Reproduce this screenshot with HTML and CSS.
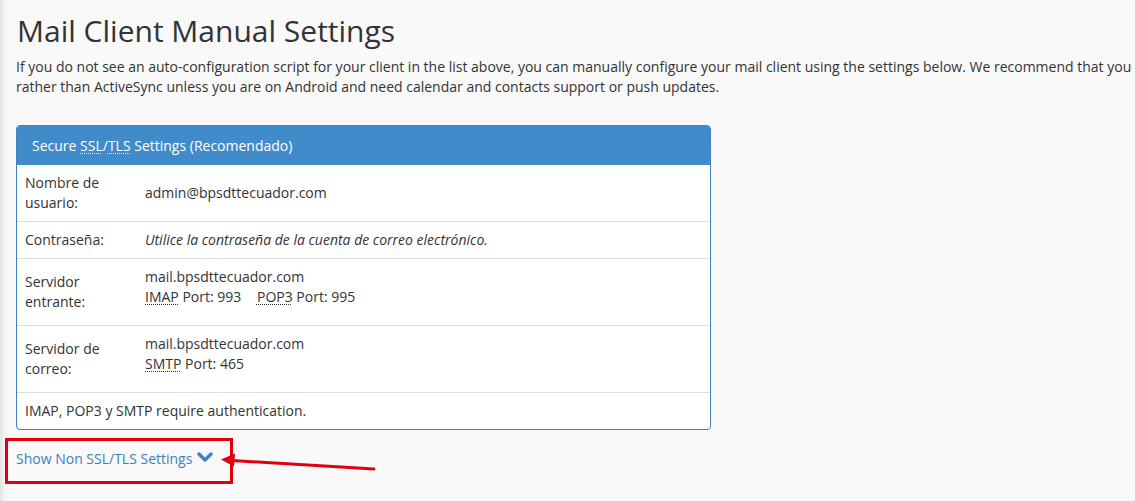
FILE: index.html
```html
<!DOCTYPE html>
<html lang="en">
<head>
<meta charset="utf-8">
<title>Mail Client Manual Settings</title>
<link rel="stylesheet" href="styles.css">
</head>
<body>
<main class="page">
  <h1 class="title">Mail Client Manual Settings</h1>
  <p class="intro">If you do not see an auto-configuration script for your client in the list above, you can manually configure your mail client using the settings below. We recommend that you<br>rather than ActiveSync unless you are on Android and need calendar and contacts support or push updates.</p>

  <section class="panel">
    <div class="panel-heading">Secure <abbr title="Secure Sockets Layer">SSL</abbr>/<abbr title="Transport Layer Security">TLS</abbr> Settings (Recomendado)</div>
    <table class="settings">
      <tr>
        <td class="label">Nombre de usuario:</td>
        <td class="value">admin@bpsdttecuador.com</td>
      </tr>
      <tr>
        <td class="label">Contraseña:</td>
        <td class="value"><em>Utilice la contraseña de la cuenta de correo electrónico.</em></td>
      </tr>
      <tr>
        <td class="label">Servidor entrante:</td>
        <td class="value server">
          <div>mail.bpsdttecuador.com</div>
          <div><abbr title="Internet Message Access Protocol">IMAP</abbr> Port: 993 <span class="gap"></span><abbr title="Post Office Protocol 3">POP3</abbr> Port: 995</div>
        </td>
      </tr>
      <tr>
        <td class="label">Servidor de correo:</td>
        <td class="value server">
          <div>mail.bpsdttecuador.com</div>
          <div><abbr title="Simple Mail Transfer Protocol">SMTP</abbr> Port: 465</div>
        </td>
      </tr>
      <tr>
        <td class="note" colspan="2">IMAP, POP3 y SMTP require authentication.</td>
      </tr>
    </table>
  </section>

  <a class="toggle" href="#">Show Non SSL/TLS Settings
    <svg class="chevron" viewBox="0 0 16 11" width="16" height="11" aria-hidden="true"><polyline points="2,2 8,8 14,2" fill="none" stroke="currentColor" stroke-width="3.4" stroke-linecap="round" stroke-linejoin="round"/></svg>
  </a>
</main>

<svg class="annotation" width="1135" height="501" viewBox="0 0 1135 501" aria-hidden="true">
  <rect x="6.5" y="439.5" width="225" height="43" fill="none" stroke="#e1000e" stroke-width="3"/>
  <line x1="374" y1="469" x2="232" y2="460.5" stroke="#e1000e" stroke-width="3" stroke-linecap="round"/>
  <polygon points="221,459.5 235,453.5 234,466.5" fill="#e1000e"/>
</svg>
</body>
</html>
```

FILE: styles.css
```css
html, body {
  margin: 0;
  padding: 0;
  overflow: hidden;
}

body {
  background: linear-gradient(to right, #e2e2e2 0px, #f2f2f2 4px, #f9f9f9 9px) #f9f9f9;
  font-family: "Open Sans", "Noto Sans", sans-serif;
  font-size: 14px;
  line-height: 20px;
  color: #333;
  position: relative;
  width: 1135px;
  height: 501px;
}

.page {
  padding-left: 16px;
}

.title {
  margin: 14px 0 0 1px;
  font-size: 30px;
  font-weight: 400;
  line-height: 33px;
  color: #333;
}

.intro {
  margin: 10px 0 0 0;
  white-space: nowrap;
}

abbr {
  text-decoration: underline dotted;
  text-underline-offset: 2px;
  text-decoration-thickness: 1px;
  cursor: help;
}

.panel {
  margin-top: 28px;
  width: 693px;
  border: 1px solid #3f80c0;
  border-radius: 4px;
  background: #fff;
  overflow: hidden;
}

.panel-heading {
  background: #428bca;
  color: #fff;
  padding: 10px 15px 9px;
  line-height: 20px;
}

.panel-heading abbr {
  text-decoration-color: rgba(255, 255, 255, 0.85);
}

.settings {
  width: 100%;
  border-collapse: collapse;
}

.settings td {
  padding: 8px;
  vertical-align: middle;
  border-top: 1px solid #ddd;
}

.settings tr:first-child td {
  border-top: 0;
}

.label {
  width: 104px;
}

.value.server > div:last-child {
  padding-bottom: 10px;
}

.gap {
  display: inline-block;
  width: 12px;
}

.note {
  padding-top: 8px;
}

.toggle {
  display: inline-flex;
  align-items: center;
  gap: 5px;
  margin-top: 19px;
  color: #3d7fbf;
  text-decoration: none;
}

.chevron {
  margin-top: -3px;
}

.annotation {
  position: absolute;
  left: 0;
  top: 0;
  pointer-events: none;
}
```
